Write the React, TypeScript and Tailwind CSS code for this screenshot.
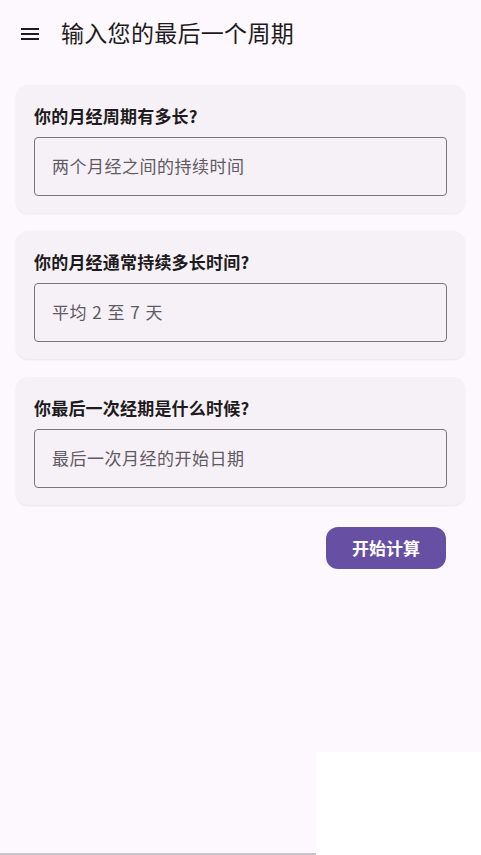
import React from "react";

const font = { fontFamily: '"Noto Sans CJK SC", "Noto Sans", sans-serif' };

function Field({ label, placeholder }: { label: string; placeholder: string }) {
  return (
    <div className="rounded-[12px] bg-[#f6f1f6] px-[18px] pt-[20px] pb-[17px] shadow-[0_1px_2px_rgba(0,0,0,0.08)]">
      <div className="text-[17px] leading-[22px] font-bold tracking-[0.2px] text-[#1d1b20]">{label}</div>
      <div className="mt-[10px] flex h-[59px] items-center rounded-[4px] border border-[#79747e] px-[17px] pb-[2px] text-[17px] tracking-[0.5px] text-[#5f5a64] [word-spacing:1px]">
        {placeholder}
      </div>
    </div>
  );
}

export default function App() {
  return (
    <div className="relative flex h-[855px] w-[481px] flex-col overflow-hidden bg-[#fdf8fd]" style={font}>
      <header className="flex h-[68px] items-center px-[21px] pb-[4px]">
        <svg width="18" height="14" viewBox="0 0 18 14" className="mt-[4px] shrink-0">
          <rect x="0" y="1" width="18" height="2" fill="#1d1b20" />
          <rect x="0" y="6" width="18" height="2" fill="#1d1b20" />
          <rect x="0" y="11" width="18" height="2" fill="#1d1b20" />
        </svg>
        <h1 className="ml-[22px] text-[23px] leading-[30px] font-normal tracking-[0.3px] text-[#1d1b20]">输入您的最后一个周期</h1>
      </header>

      <main className="mt-[17px] flex flex-col gap-[18px] px-[16px]">
        <Field label="你的月经周期有多长?" placeholder="两个月经之间的持续时间" />
        <Field label="你的月经通常持续多长时间?" placeholder="平均 2 至 7 天" />
        <Field label="你最后一次经期是什么时候?" placeholder="最后一次月经的开始日期" />
      </main>

      <div className="mt-[22px] flex justify-end pr-[35px]">
        <button className="h-[42px] w-[120px] rounded-[12px] bg-[#6750a4] text-[17px] font-bold text-white">
          开始计算
        </button>
      </div>

      <div className="flex-1" />
      <div className="flex h-[103px] items-end">
        <div className="h-[2px] w-[316px] bg-[#c9c5cc]" />
        <div className="h-full flex-1 bg-white" />
      </div>
    </div>
  );
}
